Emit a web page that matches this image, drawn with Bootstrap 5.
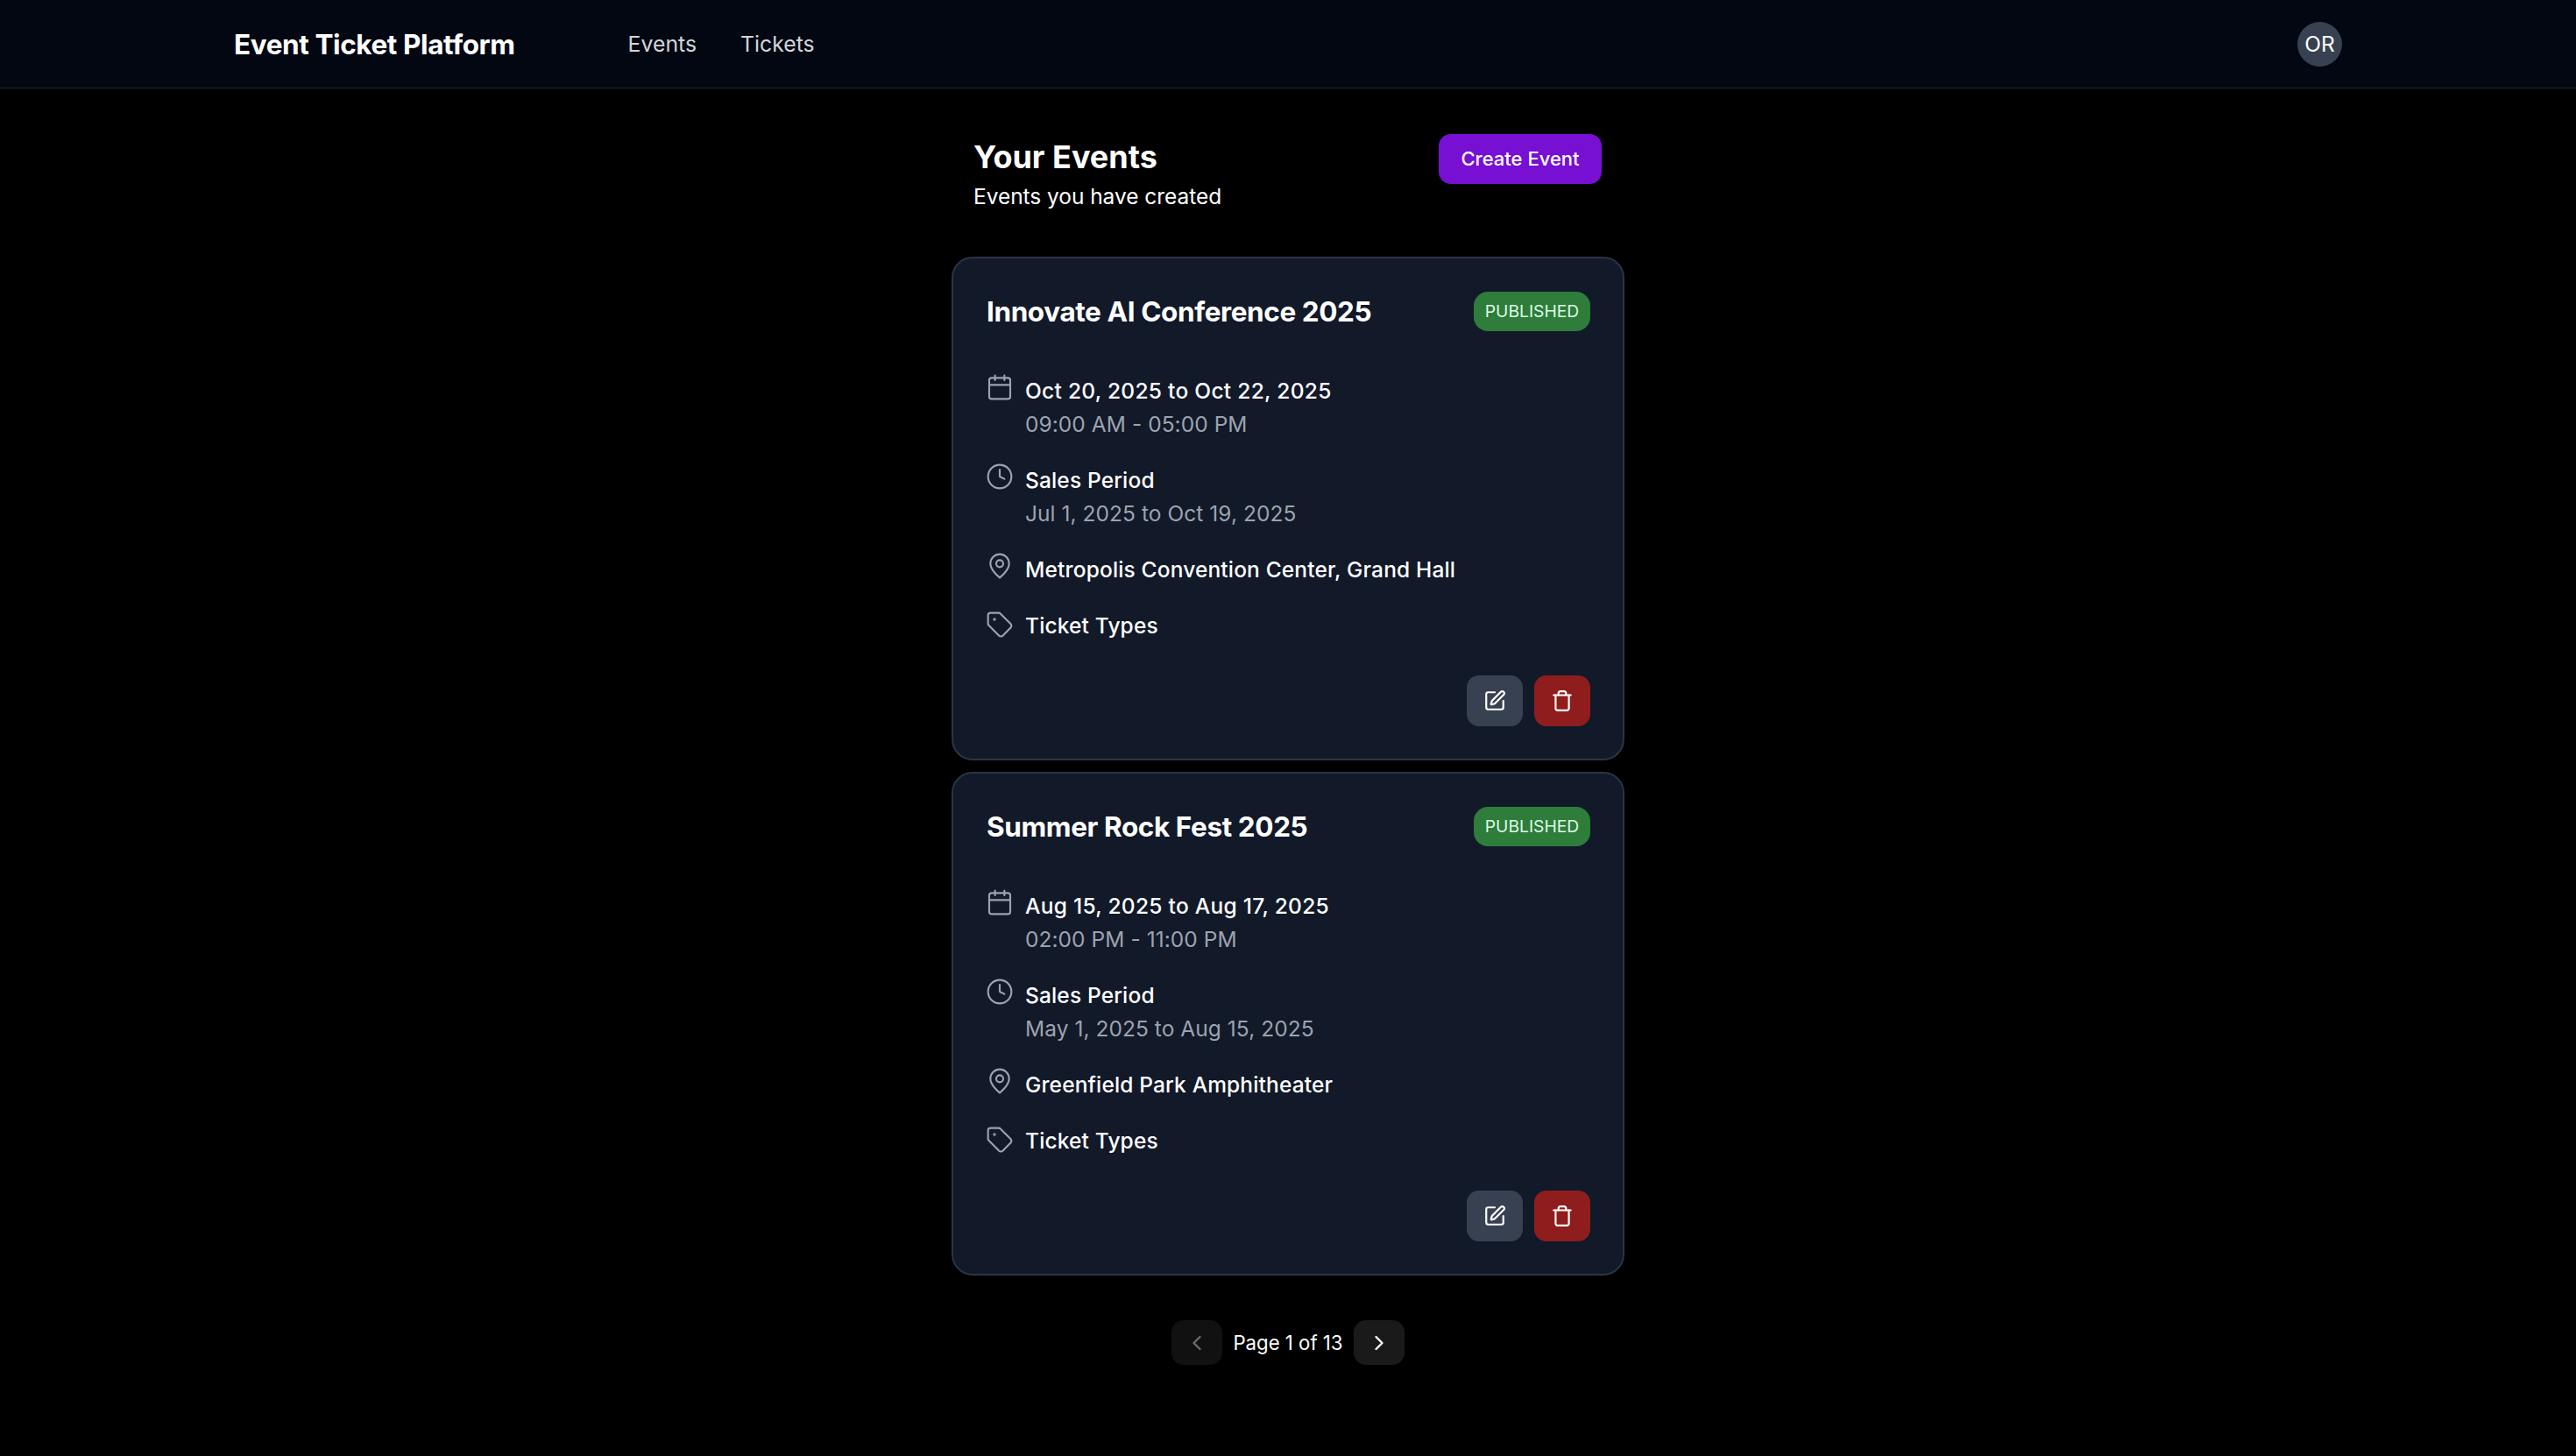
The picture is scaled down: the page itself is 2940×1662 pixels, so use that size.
<!DOCTYPE html>
<html lang="en">
<head>
<meta charset="UTF-8" />
<meta name="viewport" content="width=device-width, initial-scale=1.0" />
<title>Event Ticket Platform</title>
<link href="https://cdn.jsdelivr.net/npm/bootstrap@5.3.3/dist/css/bootstrap.min.css" rel="stylesheet" />
<style>
  body { background: #000; color: #fff; font-family: Inter, "Liberation Sans", sans-serif; font-size: 24.5px; min-height: 100vh; }
  svg.ico { fill: none; stroke: currentColor; stroke-width: 2; stroke-linecap: round; stroke-linejoin: round; flex-shrink: 0; }

  .top-bar { background: #030712; border-bottom: 1px solid #1f2937; height: 101px; padding: 0 267px; }
  .top-bar .navbar-brand { color: #fff; font-size: 31.5px; font-weight: 700; line-height: 49px; letter-spacing: -0.4px; padding: 0; margin: 0 129px 0 0; }
  .top-bar .nav-link { color: #d1d5db; font-size: 24.8px; line-height: 35px; padding: 0; margin-right: 50px; }
  .avatar-dot { width: 51px; height: 51px; background: #374151; font-size: 24.5px; color: #fff; }

  .events-col { width: 768px; padding-top: 52px; }
  .page-head { padding: 0 26px 0 25px; margin-bottom: 50px; }
  .page-head h1 { font-size: 36px; font-weight: 700; line-height: 52px; letter-spacing: 0; margin: 0; }
  .page-head p { font-size: 24.5px; line-height: 38px; letter-spacing: -0.05px; margin: 0; }
  .btn-create { background: #7710d2; border: 0; color: #fff; font-size: 22px; font-weight: 500; border-radius: 14px; width: 186px; height: 57px; padding: 0; }

  .event-card { background: #121929; border: 2px solid #2b3444; border-radius: 24px; padding: 38px 37px 38px 38px; color: #fff; height: 575px; margin-bottom: 13px; }
  .event-card h2 { font-size: 31.5px; font-weight: 700; line-height: 44px; letter-spacing: -0.4px; margin: 0; }
  .status-pill { background: #2e7d3a; color: #dcfce7; font-size: 19.25px; font-weight: 400; line-height: 45px; height: 45px; width: 133px; text-align: center; border-radius: 16px; }
  .info-list { margin-top: 49px; gap: 26px; }
  .info-row { gap: 13px; line-height: 38px; font-weight: 500; letter-spacing: 0.15px; }
  .info-row svg { color: #9ca3af; stroke-width: 1.6; margin-left: -1px; margin-top: -1px; }
  .info-row svg.tag-ico { margin-top: 2px; }
  .info-date { letter-spacing: 0.28px; }
  .info-sub { color: #9ca3af; font-weight: 400; letter-spacing: 0.05px; }
  .card-actions { margin-top: 38px; gap: 13px; }
  .icon-btn { width: 64px; height: 58px; border: 0; border-radius: 14px; color: #fff; padding: 0; }
  .icon-btn.edit { background: #374151; }
  .icon-btn.del { background: #8f1d1d; }

  .pager { margin-top: 51px; gap: 12px; font-size: 22.2px; font-weight: 400; }
  .pager-btn { width: 58px; height: 51px; border: 0; border-radius: 14px; background: #1a1a1a; color: #fff; padding: 0; }
  .pager-btn:disabled { background: #111; color: #6b6b6b; opacity: 1; }
</style>
</head>
<body>
  <!-- top bar -->
  <nav class="navbar top-bar d-flex align-items-center justify-content-between">
    <div class="d-flex align-items-center">
      <a class="navbar-brand" href="#">Event Ticket Platform</a>
      <div class="d-flex">
        <a class="nav-link" href="#">Events</a>
        <a class="nav-link" href="#">Tickets</a>
      </div>
    </div>
    <div class="avatar-dot rounded-circle d-flex align-items-center justify-content-center">OR</div>
  </nav>

  <main class="events-col mx-auto">
    <div class="page-head d-flex justify-content-between align-items-start">
      <div>
        <h1>Your Events</h1>
        <p>Events you have created</p>
      </div>
      <button class="btn btn-create">Create Event</button>
    </div>

    <!-- event 1 -->
    <div class="card event-card">
      <div class="d-flex justify-content-between align-items-center">
        <h2>Innovate AI Conference 2025</h2>
        <span class="status-pill">PUBLISHED</span>
      </div>
      <div class="info-list d-flex flex-column">
        <div class="info-row d-flex">
          <svg class="ico" width="32" height="32" viewBox="0 0 24 24"><path d="M8 2v4"/><path d="M16 2v4"/><rect width="18" height="18" x="3" y="4" rx="2"/><path d="M3 10h18"/></svg>
          <div><div class="info-date">Oct 20, 2025 to Oct 22, 2025</div><div class="info-sub">09:00 AM - 05:00 PM</div></div>
        </div>
        <div class="info-row d-flex">
          <svg class="ico" width="32" height="32" viewBox="0 0 24 24"><circle cx="12" cy="12" r="10"/><polyline points="12 6 12 12 16 14"/></svg>
          <div>Sales Period<div class="info-sub">Jul 1, 2025 to Oct 19, 2025</div></div>
        </div>
        <div class="info-row d-flex">
          <svg class="ico" width="32" height="32" viewBox="0 0 24 24"><path d="M20 10c0 6-8 12-8 12s-8-6-8-12a8 8 0 0 1 16 0Z"/><circle cx="12" cy="10" r="3"/></svg>
          <div>Metropolis Convention Center, Grand Hall</div>
        </div>
        <div class="info-row d-flex">
          <svg class="ico tag-ico" width="32" height="32" viewBox="0 0 24 24"><path d="M12.586 2.586A2 2 0 0 0 11.172 2H4a2 2 0 0 0-2 2v7.172a2 2 0 0 0 .586 1.414l8.704 8.704a2.426 2.426 0 0 0 3.42 0l6.58-6.58a2.426 2.426 0 0 0 0-3.42z"/><circle cx="7.5" cy="7.5" r=".5"/></svg>
          <div>Ticket Types</div>
        </div>
      </div>
      <div class="card-actions d-flex justify-content-end">
        <button class="btn icon-btn edit"><svg class="ico" width="26" height="26" viewBox="0 0 24 24"><path d="M12 3H5a2 2 0 0 0-2 2v14a2 2 0 0 0 2 2h14a2 2 0 0 0 2-2v-7"/><path d="M18.375 2.625a1 1 0 0 1 3 3l-9.013 9.014a2 2 0 0 1-.853.505l-2.873.84a.5.5 0 0 1-.62-.62l.84-2.873a2 2 0 0 1 .506-.852z"/></svg></button>
        <button class="btn icon-btn del"><svg class="ico" width="26" height="26" viewBox="0 0 24 24"><path d="M3 6h18"/><path d="M19 6v14c0 1-1 2-2 2H7c-1 0-2-1-2-2V6"/><path d="M8 6V4c0-1 1-2 2-2h4c1 0 2 1 2 2v2"/></svg></button>
      </div>
    </div>

    <!-- event 2 -->
    <div class="card event-card">
      <div class="d-flex justify-content-between align-items-center">
        <h2>Summer Rock Fest 2025</h2>
        <span class="status-pill">PUBLISHED</span>
      </div>
      <div class="info-list d-flex flex-column">
        <div class="info-row d-flex">
          <svg class="ico" width="32" height="32" viewBox="0 0 24 24"><path d="M8 2v4"/><path d="M16 2v4"/><rect width="18" height="18" x="3" y="4" rx="2"/><path d="M3 10h18"/></svg>
          <div><div class="info-date">Aug 15, 2025 to Aug 17, 2025</div><div class="info-sub">02:00 PM - 11:00 PM</div></div>
        </div>
        <div class="info-row d-flex">
          <svg class="ico" width="32" height="32" viewBox="0 0 24 24"><circle cx="12" cy="12" r="10"/><polyline points="12 6 12 12 16 14"/></svg>
          <div>Sales Period<div class="info-sub">May 1, 2025 to Aug 15, 2025</div></div>
        </div>
        <div class="info-row d-flex">
          <svg class="ico" width="32" height="32" viewBox="0 0 24 24"><path d="M20 10c0 6-8 12-8 12s-8-6-8-12a8 8 0 0 1 16 0Z"/><circle cx="12" cy="10" r="3"/></svg>
          <div>Greenfield Park Amphitheater</div>
        </div>
        <div class="info-row d-flex">
          <svg class="ico tag-ico" width="32" height="32" viewBox="0 0 24 24"><path d="M12.586 2.586A2 2 0 0 0 11.172 2H4a2 2 0 0 0-2 2v7.172a2 2 0 0 0 .586 1.414l8.704 8.704a2.426 2.426 0 0 0 3.42 0l6.58-6.58a2.426 2.426 0 0 0 0-3.42z"/><circle cx="7.5" cy="7.5" r=".5"/></svg>
          <div>Ticket Types</div>
        </div>
      </div>
      <div class="card-actions d-flex justify-content-end">
        <button class="btn icon-btn edit"><svg class="ico" width="26" height="26" viewBox="0 0 24 24"><path d="M12 3H5a2 2 0 0 0-2 2v14a2 2 0 0 0 2 2h14a2 2 0 0 0 2-2v-7"/><path d="M18.375 2.625a1 1 0 0 1 3 3l-9.013 9.014a2 2 0 0 1-.853.505l-2.873.84a.5.5 0 0 1-.62-.62l.84-2.873a2 2 0 0 1 .506-.852z"/></svg></button>
        <button class="btn icon-btn del"><svg class="ico" width="26" height="26" viewBox="0 0 24 24"><path d="M3 6h18"/><path d="M19 6v14c0 1-1 2-2 2H7c-1 0-2-1-2-2V6"/><path d="M8 6V4c0-1 1-2 2-2h4c1 0 2 1 2 2v2"/></svg></button>
      </div>
    </div>

    <!-- pagination -->
    <div class="pager d-flex justify-content-center align-items-center">
      <button class="btn pager-btn" disabled><svg class="ico" width="28" height="28" viewBox="0 0 24 24"><path d="m15 18-6-6 6-6"/></svg></button>
      <span>Page 1 of 13</span>
      <button class="btn pager-btn"><svg class="ico" width="28" height="28" viewBox="0 0 24 24"><path d="m9 18 6-6-6-6"/></svg></button>
    </div>
  </main>

  <script src="https://cdn.jsdelivr.net/npm/bootstrap@5.3.3/dist/js/bootstrap.bundle.min.js"></script>
</body>
</html>
